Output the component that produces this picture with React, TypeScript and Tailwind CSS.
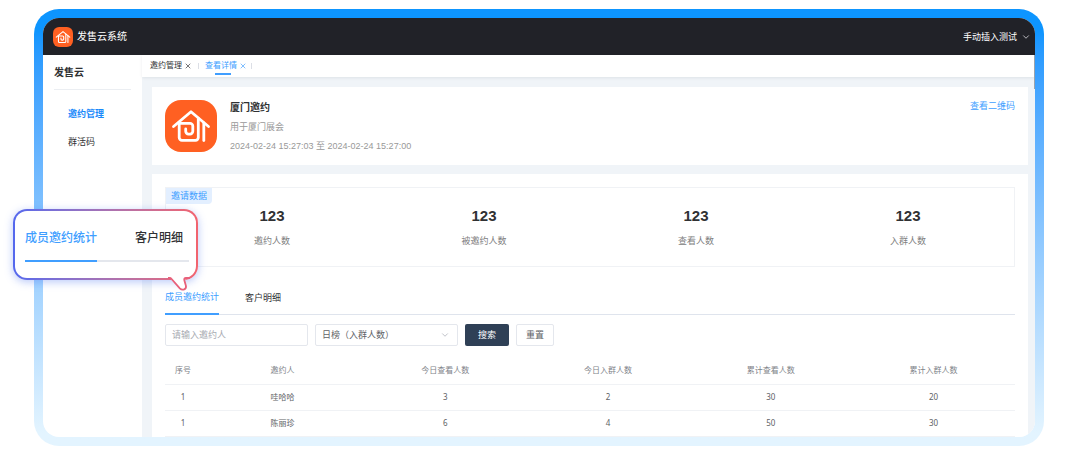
import { ChevronDown, X } from 'lucide-react';
import { useState } from 'react';

const stats = [
  { label: '邀约人数', value: 123 },
  { label: '被邀约人数', value: 123 },
  { label: '查看人数', value: 123 },
  { label: '入群人数', value: 123 },
];

const columns = ['序号', '邀约人', '今日查看人数', '今日入群人数', '累计查看人数', '累计入群人数'];

const rows = [
  [1, '哇哈哈', 3, 2, 30, 20],
  [1, '陈丽珍', 6, 4, 50, 30],
];

function Logo({ className }: { className: string }) {
  return (
    <svg viewBox="0 0 52 52" className={className} aria-hidden="true">
      <rect width="52" height="52" rx="16" fill="#ff6022" />
      <g fill="none" stroke="#fff" strokeWidth="2.8" strokeLinecap="round" strokeLinejoin="round">
        <path d="M8.500 26.500 26 11.800l17.500 14.700" />
        <path d="M38.800 23v17.500" />
        <path d="M33.300 18.500v19a2.800 2.800 0 0 1-2.800 2.800H17a2.800 2.800 0 0 1-2.800-2.800V23.300H25a2.800 2.800 0 0 1 2.800 2.800v5.200a2.800 2.800 0 0 1-2.800 2.800h-1.500a2.800 2.800 0 0 1-2.800-2.800V29" />
      </g>
    </svg>
  );
}

function Callout() {
  return (
    <div className="absolute top-[209px] left-[13px] w-[185px] rounded-[14px] bg-linear-to-r from-[#5468ee] to-[#f2636e] p-0.5 shadow-[0_2px_8px_rgba(80,120,240,0.4)]">
      <div className="rounded-xl bg-white pt-[19px] pr-[7px] pb-4 pl-2.5">
        <div className="flex border-b-2 border-[#e4e7ed] text-[12px] leading-4 font-medium">
          <span className="-mb-0.5 border-b-2 border-[#409eff] pb-3.5 text-[#409eff]">成员邀约统计</span>
          <span className="ml-auto pr-1.5 text-[#303133]">客户明细</span>
        </div>
      </div>
      <svg viewBox="0 0 22 16" className="absolute top-[67px] right-2 h-4 w-[22px]" aria-hidden="true">
        <path d="M2.500 0v2.500L12 12.500c2.500 2.600 6.600 1 5.900-2.300L16.500 4.500 18.500 1.500V0Z" fill="#fff" />
        <path
          d="M0 2h1.500c1 0 1.500.3 2.100 1l8.200 9.300c2.700 2.800 7 .9 6.100-2.600l-1.500-5.200C15.900 2.800 16.500 2 18 2h4"
          fill="none"
          stroke="#e8607a"
          strokeWidth="1.800"
        />
      </svg>
    </div>
  );
}

export default function App() {
  const [inviter, setInviter] = useState('');
  const [rank, setRank] = useState('day');

  return (
    <div className="relative min-h-screen bg-white pt-[9px] pr-9 pb-2.5 pl-[34px] font-['Liberation_Sans','Noto_Sans_CJK_SC',sans-serif] text-[9px] leading-3 text-[#606266]">
      <div className="rounded-[25px] bg-linear-to-b from-[#0d95ff] from-5% to-[#e3f4ff] to-97% p-[9px]">
        <div className="relative overflow-hidden rounded-2xl bg-white">
          <header className="flex h-[37px] items-center bg-[#212228] pr-1 pl-2.5 text-white">
            <Logo className="h-5 w-5" />
            <h1 className="ml-1 text-[10px] leading-4">发售云系统</h1>
            <button type="button" className="ml-auto flex items-center gap-1">
              手动插入测试
              <ChevronDown className="h-2.5 w-2.5 text-zinc-300" />
            </button>
          </header>

          <div className="flex">
            <aside className="w-[99px] shrink-0 px-[11px]">
              <h2 className="border-b border-[#ebeef2] pt-2.5 pb-2 text-[10px] leading-4 font-bold text-[#303133]">
                发售云
              </h2>
              <nav className="flex flex-col gap-4 pt-[18px] pl-3.5">
                <a href="#invite" className="font-bold text-[#1989fa]">邀约管理</a>
                <a href="#group" className="text-[#303133]">群活码</a>
              </nav>
            </aside>

            <main className="min-w-0 flex-1 bg-[#f0f4f8]">
              <div className="flex h-[22px] items-center bg-white pl-2 text-[8px] text-[#303133] shadow-[0_1px_3px_rgba(0,21,41,0.08)]">
                <a href="#invite">邀约管理</a>
                <button type="button" aria-label="关闭邀约管理" className="ml-0.5">
                  <X className="h-2 w-2" />
                </button>
                <span className="mx-1.5 h-1.5 w-px bg-[#dcdfe6]" />
                <div className="relative flex h-full items-center text-[#409eff]">
                  <a href="#detail">查看详情</a>
                  <button type="button" aria-label="关闭查看详情" className="ml-0.5">
                    <X className="h-2 w-2" />
                  </button>
                  <span className="absolute bottom-0.5 left-2.5 h-0.5 w-4 bg-[#409eff]" />
                </div>
                <span className="ml-1 h-1.5 w-px bg-[#dcdfe6]" />
              </div>

              <div className="flex flex-col gap-[9px] pt-2.5 pr-[7px] pl-2.5">
                <section className="flex items-start bg-white p-[13px]">
                  <Logo className="h-[52px] w-[52px] shrink-0" />
                  <div className="ml-[13px] flex flex-col gap-[7px] text-[#999]">
                    <h2 className="pt-0.5 text-[10px] leading-3 font-bold text-[#303133]">厦门邀约</h2>
                    <p>用于厦门展会</p>
                    <p>2024-02-24 15:27:03 至 2024-02-24 15:27:00</p>
                  </div>
                  <a href="#qrcode" className="ml-auto text-[#409eff]">查看二维码</a>
                </section>

                <section className="bg-white px-[13px] pt-[13px]">
                  <div className="relative border border-[#f0f2f5] pt-[18px] pb-[19px]">
                    <span className="absolute top-0 left-0 rounded-br bg-[#e3efff] px-[5px] py-0.5 text-[#409eff]">
                      邀请数据
                    </span>
                    <dl className="grid grid-cols-4 text-center">
                      {stats.map((s) => (
                        <div key={s.label} className="flex flex-col-reverse gap-[9px]">
                          <dt className="text-[#808080]">{s.label}</dt>
                          <dd className="text-[15px] leading-5 font-bold text-[#303133]">{s.value}</dd>
                        </div>
                      ))}
                    </dl>
                  </div>

                  <div role="tablist" className="mt-6 flex gap-[26px] border-b border-[#dfe4ed]">
                    <button type="button" role="tab" aria-selected="true" className="-mb-px border-b-2 border-[#409eff] pb-2.5 text-[#409eff]">
                      成员邀约统计
                    </button>
                    <button type="button" role="tab" aria-selected="false" className="pb-2.5 text-[#303133]">
                      客户明细
                    </button>
                  </div>

                  <form className="flex gap-[7px] pt-[9px]" onSubmit={(e) => e.preventDefault()}>
                    <input
                      type="text"
                      aria-label="邀约人"
                      value={inviter}
                      onChange={(e) => setInviter(e.target.value)}
                      placeholder="请输入邀约人"
                      className="h-[22px] w-[143px] rounded-xs border border-[#e4e7ed] px-1.5 placeholder:text-[#a8abb2]"
                    />
                    <div className="relative">
                      <select
                        aria-label="榜单"
                        value={rank}
                        onChange={(e) => setRank(e.target.value)}
                        className="h-[22px] w-[143px] appearance-none rounded-xs border border-[#e4e7ed] bg-white px-1.5"
                      >
                        <option value="day">日榜（入群人数）</option>
                        <option value="total">总榜（入群人数）</option>
                      </select>
                      <ChevronDown className="pointer-events-none absolute top-1.5 right-2 h-2.5 w-2.5 text-[#b4b7bf]" />
                    </div>
                    <button type="submit" className="h-[22px] w-11 rounded-xs bg-[#2f4056] text-white">
                      搜索
                    </button>
                    <button type="button" onClick={() => setInviter('')} className="h-[22px] w-[38px] rounded-xs border border-[#e4e7ed]">
                      重置
                    </button>
                  </form>

                  <table className="mt-3 w-full table-fixed text-center text-[8px]">
                    <thead>
                      <tr className="h-[26px] border-b border-[#f0f2f5] text-[#808389]">
                        {columns.map((c, i) => (
                          <th key={c} className={i === 0 ? 'w-9 font-normal' : 'font-normal'}>
                            {c}
                          </th>
                        ))}
                      </tr>
                    </thead>
                    <tbody className="font-['Noto_Sans','Noto_Sans_CJK_SC',sans-serif]">
                      {rows.map((row, i) => (
                        <tr key={i} className="h-[26px] border-b border-[#f0f2f5]">
                          {row.map((cell, j) => (
                            <td key={j}>{cell}</td>
                          ))}
                        </tr>
                      ))}
                    </tbody>
                  </table>
                </section>
              </div>
            </main>
          </div>
          <span className="absolute top-[37px] right-0 h-[34px] w-px bg-[#9aa3ad]" />
        </div>
      </div>
      <Callout />
    </div>
  );
}
